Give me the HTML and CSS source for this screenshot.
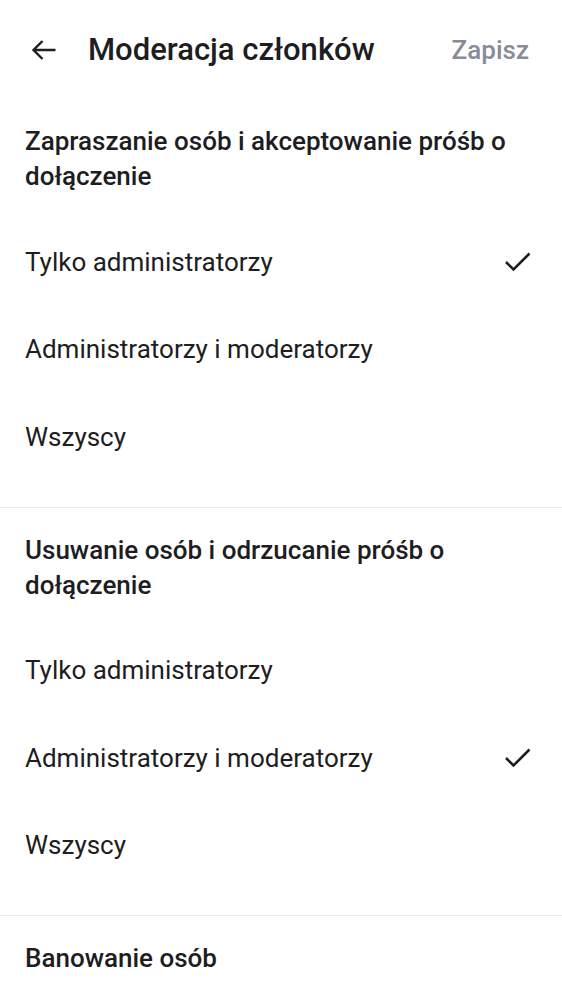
FILE: index.html
```html
<!DOCTYPE html>
<html lang="pl">
<head>
<meta charset="utf-8">
<link rel="stylesheet" href="styles.css">
</head>
<body>
<div class="screen">
  <header class="topbar">
    <button class="back" aria-label="Wstecz">
      <svg width="26" height="24" viewBox="0 0 26 24"><path d="M24.5 12H2.5M11.5 3L2.5 12l9 9" fill="none" stroke="#1d1d22" stroke-width="2.4" stroke-linecap="butt" stroke-linejoin="miter"/></svg>
    </button>
    <h1 class="title">Moderacja członków</h1>
    <span class="save">Zapisz</span>
  </header>

  <section class="group">
    <h2 class="group-title">Zapraszanie osób i akceptowanie próśb o dołączenie</h2>
    <ul class="options">
      <li class="option"><span>Tylko administratorzy</span>
        <svg class="check" width="28" height="20" viewBox="0 0 28 20"><polyline points="2,10 9.5,17.5 25.5,1.5" fill="none" stroke="#1d1d22" stroke-width="2.6"/></svg>
      </li>
      <li class="option"><span>Administratorzy i moderatorzy</span></li>
      <li class="option"><span>Wszyscy</span></li>
    </ul>
  </section>

  <section class="group">
    <h2 class="group-title">Usuwanie osób i odrzucanie próśb o dołączenie</h2>
    <ul class="options">
      <li class="option"><span>Tylko administratorzy</span></li>
      <li class="option"><span>Administratorzy i moderatorzy</span>
        <svg class="check" width="28" height="20" viewBox="0 0 28 20"><polyline points="2,10 9.5,17.5 25.5,1.5" fill="none" stroke="#1d1d22" stroke-width="2.6"/></svg>
      </li>
      <li class="option"><span>Wszyscy</span></li>
    </ul>
  </section>

  <section class="group group-last">
    <h2 class="group-title">Banowanie osób</h2>
  </section>
</div>
</body>
</html>
```

FILE: styles.css
```css
* { box-sizing: border-box; }
html, body { margin: 0; padding: 0; background: #ffffff; }
body {
  font-family: Roboto, "Noto Sans", "Liberation Sans", sans-serif;
  color: #1d1d22;
  width: 562px;
  height: 1000px;
  overflow: hidden;
}
.screen { display: flex; flex-direction: column; }

.topbar {
  height: 99px;
  display: flex;
  align-items: center;
  padding: 0 33px 0 31px;
}
.back {
  border: 0;
  background: none;
  padding: 0;
  margin: 0;
  width: 26px;
  height: 24px;
  display: flex;
  margin-right: 31px;
}
.title {
  margin: 0;
  flex: 1;
  font-size: 31px;
  font-weight: 500;
  letter-spacing: 0;
  color: #1d1d22;
}
.save {
  font-size: 26px;
  font-weight: 500;
  color: #878c97;
}

.group {
  padding: 25px 0 26px;
  border-bottom: 1px solid #e9e9ee;
}
.group-last { border-bottom: 0; }
.group-title {
  margin: 0;
  padding: 0 28px 0 25px;
  font-size: 26px;
  line-height: 35px;
  font-weight: 500;
  color: #1d1d22;
}
.options {
  list-style: none;
  margin: 24px 0 0;
  padding: 0;
}
.option {
  height: 87.5px;
  display: flex;
  align-items: center;
  justify-content: space-between;
  padding: 0 30px 0 25px;
  font-size: 26px;
  font-weight: 400;
}
.check { display: block; }
```
